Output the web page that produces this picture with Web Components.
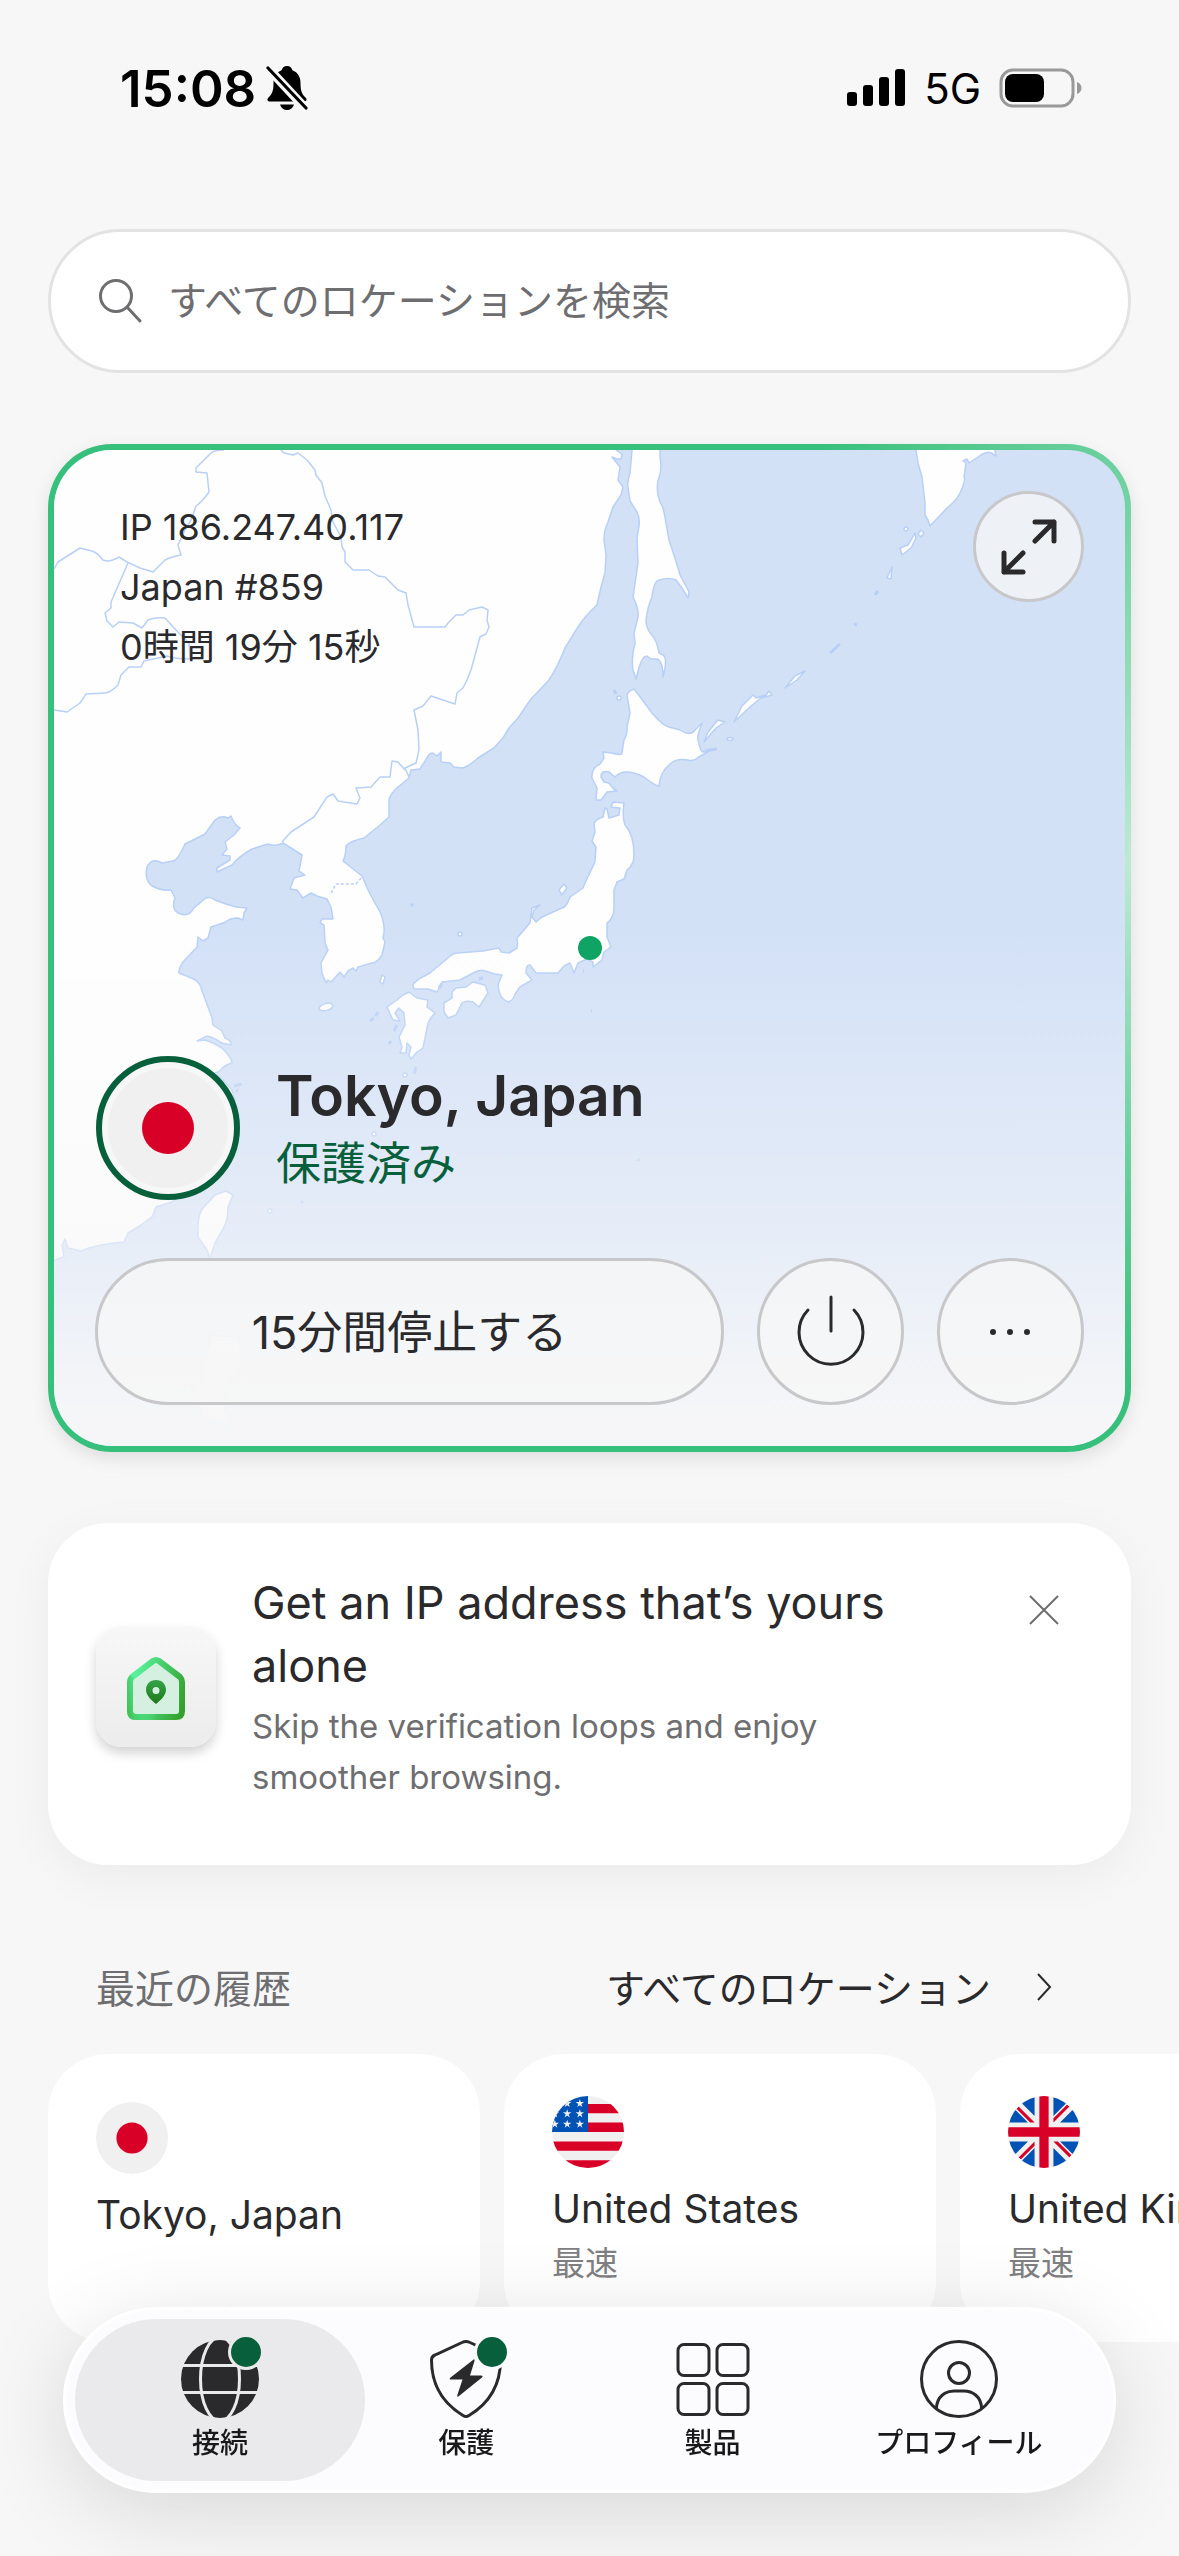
<!DOCTYPE html>
<html lang="ja">
<head>
<meta charset="utf-8">
<meta name="viewport" content="width=device-width, initial-scale=1">
<title>VPN</title>
<style>
	:root {
		--ink: #2a2a2d;
		--muted: #6e6e71;
		--green: #37c07b;
		--deep-green: #07603b;
		--page: #f7f7f7;
	}

	body {
		margin: 0;
		min-height: 100vh;
		background: var(--page);
		color: var(--ink);
		font-family: Inter, "Noto Sans CJK JP", sans-serif;
		overflow: hidden;
	}

	main {
		display: flex;
		flex-direction: column;
		gap: 71px;
		padding: 53px 48px 200px;
	}
</style>
</head>
<body>
	<status-bar time="15:08" network="5G"></status-bar>
	<main>
		<search-field placeholder="すべてのロケーションを検索"></search-field>
		<connection-card>
			<span slot="info">IP 186.247.40.117</span>
			<span slot="info">Japan #859</span>
			<span slot="info">0時間 19分 15秒</span>
			<country-flag slot="flag" country="jp"></country-flag>
			<span slot="place">Tokyo, Japan</span>
			<span slot="status">保護済み</span>
			<span slot="pause">15分間停止する</span>
		</connection-card>
		<promo-card>
			<span slot="title">Get an IP address that’s yours alone</span>
			<span slot="text">Skip the verification loops and enjoy smoother browsing.</span>
		</promo-card>
		<recent-locations>
			<span slot="title">最近の履歴</span>
			<span slot="more">すべてのロケーション</span>
			<location-card country="jp" name="Tokyo, Japan"></location-card>
			<location-card country="us" name="United States" note="最速"></location-card>
			<location-card country="gb" name="United Kingdom" note="最速"></location-card>
		</recent-locations>
	</main>
	<tab-bar>
		<tab-item icon="globe" active badge>接続</tab-item>
		<tab-item icon="shield" badge>保護</tab-item>
		<tab-item icon="grid">製品</tab-item>
		<tab-item icon="profile">プロフィール</tab-item>
	</tab-bar>

<script>
class StatusBar extends HTMLElement {
	constructor() {
		super();
		this.shadow = this.attachShadow({ mode: "open" });
	}

	connectedCallback() {
		this.shadow.innerHTML = `
			<style>
				:host {
					display: flex;
					justify-content: space-between;
					align-items: center;
					height: 176px;
					padding: 0 96px 0 120px;
					color: #000;
				}

				.group {
					display: flex;
					align-items: center;
				}

				.time {
					font-size: 51px;
					font-weight: 600;
					margin-right: 10px;
				}

				.network {
					font-size: 42px;
					margin: 0 18px;
				}

				svg {
					display: block;
				}
			</style>
			<div class="group">
				<span class="time">${this.getAttribute("time")}</span>
				<svg width="42" height="44" viewBox="0 0 42 44">
					<path d="M21 0c3 0 5 2 5.400 4.300C32 6.500 34.500 11 34.500 17c0 8 1.500 11 5 14.500C41.500 33.500 40.500 35.500 38 35.500H4C1.500 35.500.500 33.500 2.500 31.500 6 28 7.500 25 7.500 17c0-6 2.500-10.500 8.100-12.700C16 2 18 0 21 0z"/>
					<path d="M14 38.500h14c-1 3.500-3.500 5.500-7 5.500s-6-2-7-5.500z"/>
					<path d="M1 1l39 42" stroke="#f7f7f7" stroke-width="9"/>
					<path d="M2 2l38 40" stroke="#000" stroke-width="3.200" stroke-linecap="round"/>
				</svg>
			</div>
			<div class="group">
				<svg width="60" height="38" viewBox="0 0 60 38">
					<rect x="1" y="23" width="10" height="14" rx="3"/>
					<rect x="17" y="16" width="10" height="21" rx="3"/>
					<rect x="33" y="8" width="10" height="29" rx="3"/>
					<rect x="49" y="0" width="10" height="37" rx="3"/>
				</svg>
				<span class="network">${this.getAttribute("network")}</span>
				<svg width="84" height="40" viewBox="0 0 84 40">
					<rect x="2" y="2" width="72" height="36" rx="12" fill="none" stroke="#999" stroke-width="3"/>
					<rect x="6" y="6" width="39" height="28" rx="8"/>
					<path d="M78 14c6 2 6 10 0 12z" fill="#999"/>
				</svg>
			</div>`;
	}
}
customElements.define("status-bar", StatusBar);

class SearchField extends HTMLElement {
	constructor() {
		super();
		this.shadow = this.attachShadow({ mode: "open" });
	}

	connectedCallback() {
		const text = this.getAttribute("placeholder");
		this.shadow.innerHTML = `
			<style>
				:host {
					display: block;
				}

				label {
					display: flex;
					align-items: center;
					gap: 24px;
					height: 144px;
					padding: 0 45px;
					box-sizing: border-box;
					border: 3px solid #e3e3e3;
					border-radius: 72px;
					background: #fff;
				}

				svg {
					flex: none;
				}

				input {
					flex: 1;
					min-width: 0;
					border: 0;
					padding: 0;
					outline: 0;
					background: none;
					color: var(--ink);
					font: inherit;
					font-size: 39px;
					line-height: 60px;
				}

				input::placeholder {
					color: var(--muted);
					opacity: 1;
				}
			</style>
			<label>
				<svg width="48" height="48" viewBox="0 0 48 48" fill="none" stroke="#6e6e71" stroke-width="3" stroke-linecap="round">
					<circle cx="20" cy="19" r="15.500"/>
					<path d="M31 30l13 14"/>
				</svg>
				<input type="search" aria-label="${text}" placeholder="${text}">
			</label>`;
	}
}
customElements.define("search-field", SearchField);

// Round flags on a 512 grid
const star = (x, y) =>
	`<path transform="translate(${x} ${y})" d="M0-31 7-9H30L11 5 18 27 0 13-18 27-11 5-30-9H-7z"/>`;

const FLAGS = {
	jp: `<circle cx="256" cy="256" r="111" fill="#d80027"/>`,
	us: `
		<path fill="#d80027" d="M245 56h267v66H245zM245 189h267v67H245zM0 323h512v67H0zM0 456h512v56H0z"/>
		<path fill="#0052b4" d="M0 0h256v256H0z"/>
		<g fill="#f0f0f0">${[52, 125, 199]
			.map((y) => [20, 108, 198].map((x) => star(x, y)).join(""))
			.join("")}</g>`,
	gb: `
		<path fill="#0052b4" d="M53 100 0 60V189H142zM512 189V60L459 100 370 189zM0 323V452L53 412 142 323zM412 53 450 0H323V142zM100 459 60 512H189V370zM189 0H60L100 53 189 142zM323 512H452L412 459 323 370zM370 323l89 89 53 40V323z"/>
		<path fill="#d80027" d="M0 223H223V0H289V223H512V289H289V512H223V289H0z"/>
		<path fill="#d80027" d="M323 323 437 437 452 421 354 323zM189 323 75 437 91 452 189 354zM189 189 75 75 60 91 158 189zM323 189 437 75 421 60 323 158z"/>`,
};

class CountryFlag extends HTMLElement {
	constructor() {
		super();
		this.shadow = this.attachShadow({ mode: "open" });
	}

	connectedCallback() {
		this.shadow.innerHTML = `
			<style>
				:host {
					display: block;
					width: 72px;
					height: 72px;
				}

				svg {
					display: block;
					width: 100%;
					height: 100%;
					border-radius: 50%;
				}
			</style>
			<svg viewBox="0 0 512 512" aria-hidden="true">
				<path fill="#f0f0f0" d="M0 0h512v512H0z"/>
				${FLAGS[this.getAttribute("country")]}
			</svg>`;
	}
}
customElements.define("country-flag", CountryFlag);

class RegionMap extends HTMLElement {
	constructor() {
		super();
		this.shadow = this.attachShadow({ mode: "open" });
	}

	connectedCallback() {
		this.shadow.innerHTML = `
			<style>
				:host {
					display: block;
					background: #d3e1f7;
				}

				svg {
					display: block;
					width: 100%;
					height: 100%;
				}
			</style>
			<svg viewBox="0 0 1071 996" preserveAspectRatio="xMidYMid slice" aria-hidden="true">
				<defs>
					<linearGradient id="fade" x2="0" y2="1">
						<stop offset=".48" stop-color="#f7f7f8" stop-opacity="0"/>
						<stop offset=".75" stop-color="#f7f7f8" stop-opacity=".460"/>
						<stop offset=".97" stop-color="#f7f7f8" stop-opacity=".960"/>
					</linearGradient>
				</defs>
				<g fill="#fefefe" stroke="#b8d0f6" stroke-width="1.500" stroke-linejoin="round">
					<!-- mainland -->
					<path d="M-4-4H562V0L568 4 567 9 563 9 558 7 566 17 564 30 569 37 567 45 559 57 554 72Q550 80 550 90L552 105 551 123 547 137 543 155Q530 167 524 177L511 198Q504 216 495 230L477 249 464 268 455 278 449 288 440 298 424 308Q414 317 408 318L400 317 396 313 387 312 387 302 383 306 379 303Q375 303 373 308L366 319 357 320 355 328 344 337Q336 344 335 350V367L326 375 310 388Q296 391 292 396 292 405 289 411L308 426 315 442 326 462Q331 473 330 483L329 488 331 492 328 505Q323 513 318 513L304 517 302 521 299 518 294 521 290 527 286 522 277 532 274 530 272 533 268 523 267 513 274 500 271 493 270 475 266 473 268 469 279 469 277 457 273 449 263 446 257 443 249 448 243 440 236 439 240 428 251 425 245 421 248 405 237 398 229 393Q221 397 214 394L198 399Q184 407 178 415L163 422V418L176 410V406L168 405 173 399 171 392 180 385 186 378Q181 376 177 366L174 368Q167 365 161 370L151 384 131 394Q124 410 119 411L108 413Q98 407 93 417 90 430 98 436 107 441 117 440L121 448Q117 458 124 463 135 468 140 458L147 452Q154 444 161 450L172 454 182 457 193 458 190 463 189 470 184 468Q176 468 172 472L157 477 154 488 149 491 144 487 143 497 129 512Q124 520 125 523L135 527Q146 531 147 538L158 568 159 575 168 581 171 588Q178 591 177 595L168 593 161 589Q153 584 149 588L143 591 151 590 159 593 168 598Q178 608 178 613 170 615 166 621L161 623 172 633 178 640 182 655 178 680 165 710 140 735 118 752 102 757 98 767 84 777 74 783 70 792 60 793 47 795 35 798 27 801 14 798 11 789 8 795 10 807 3 809 0 811H-4z"/>
					<!-- Sakhalin -->
					<path d="M578-4V0L576 23Q573 32 574 37L576 51 583 62Q586 68 585 76L583 88 584 113 579 147Q585 158 584 167L580 183 581 193Q577 210 579 220L582 229 585 218Q588 206 593 206L597 209H603Q609 211 609 227 614 208 609 205L605 203Q603 190 597 184 592 178 592 170 594 155 598 147 600 131 605 130 615 127 622 130L628 138 634 148 635 142 626 125 621 108 615 90 611 67 609 58 606 52Q601 39 605 27 608 21 606 6V-4z"/>
					<!-- Kamchatka -->
					<path d="M862-4V0L864 13 868 27 871 53 871 65 874 70 876 76 893 58Q903 50 906 43 912 30 910 27L912 13 909 11 913 9 915 13 927 5Q934 1 937 3L942 6 940-4z"/>
					<!-- Hokkaido -->
					<path d="M580 239 587 248 598 263Q609 276 615 277L626 280Q636 287 641 280L648 273 644 285Q643 291 648 302L655 301 645 307Q639 312 634 310 622 308 616 314 606 322 605 336 600 335 590 327 570 317 561 327L555 322Q547 320 547 327L550 332 555 333Q559 339 563 341L553 342 547 350H542L543 338 538 328Q537 318 546 314L550 308 549 302 558 303Q568 306 568 303L570 290Q574 284 573 277L576 263 573 245Q574 241 580 239z"/>
					<!-- Honshu -->
					<path d="M551 358 549 367Q544 368 540 373L541 382 538 391 542 397 541 412 531 433 529 438 516 447Q513 457 508 458L488 467 482 472 478 467 480 460 486 455 478 458 476 473 463 488Q464 495 463 498L455 503 447 502 445 498 429 501 404 503Q398 503 394 508L376 523Q360 531 359 535L360 539 374 539 383 542 388 532 406 530 419 523Q426 519 431 521L441 524 448 525 444 535Q445 549 454 552 460 550 461 544L466 537 478 530 472 523Q472 514 476 515L482 523H504L510 516 516 513 520 523 524 513 533 509 539 512V517L548 510 550 502 557 497 553 487V473Q560 468 560 458V440L563 432 570 429 573 420Q580 415 580 405 580 385 571 375 568 367 570 353L559 352 557 357 566 358 565 365 555 368 553 359z"/>
					<!-- Shikoku and Kyushu -->
					<path d="M398 542 402 538 412 537 419 532 431 535 434 543 425 557 419 552Q412 550 408 553L402 565 394 568 390 562V553L398 548z"/>
					<path d="M355 542 363 548 374 550 373 557 381 563Q374 570 373 578L369 598 363 602 357 609 355 605 357 597 353 593 352 603 346 603 348 597 345 587 351 575 350 563 345 558 341 563 346 571 339 570 333 557 343 550 349 545z"/>
					<ellipse cx="272" cy="557" rx="7" ry="3.500" transform="rotate(-15 272 557)"/>
					<!-- Taiwan, Luzon -->
					<path d="M172 741 179 745 174 757Q174 770 170 777L161 793 156 808 153 800 144 787Q143 765 149 758L161 745z"/>
					<path d="M157 885 185 888 188 913 173 937 169 953 177 977 149 967 143 947 137 937 147 930z"/>
					<!-- islands -->
					<path d="M861 83 862 88 857 98 848 105 846 98 854 95zM867 80 870 83 867 87 864 84zM838 117 833 128 837 129zM731 238 741 226 751 221 743 230zM680 272 688 256 699 245 702 248 712 245 715 241 718 245 707 248 697 256zM650 292 654 282 664 270 671 272 662 278zM510 434 505 440 508 445 513 438zM328 525 326 532 329 534 331 527z"/>
					<ellipse cx="676" cy="289" rx="3" ry="1.500"/>
					<circle cx="852" cy="79" r="2"/>
					<circle cx="565" cy="248" r="2"/>
					<circle cx="358" cy="455" r="1"/>
					<circle cx="406" cy="484" r="2"/>
					<circle cx="351" cy="625" r="2"/>
					<circle cx="320" cy="684" r="2"/>
					<circle cx="216" cy="761" r="2"/>
					<path fill="none" stroke-width="3" d="M821 145l3-4M801 176l1-3M776 203l10-9M651 301l12-2M560 240l2 4M360 624l2-7M316 571l4-3M322 566l2-4M335 594l2-3M340 581l3-6M385 538l3-4M425 529l4-1M180 636l8-2M182 642l2-3M247 751l2 2M584 709l1 2M537 561h1M529 521h1"/>
				</g>
				<g fill="none" stroke="#b8d0f6" stroke-width="1.500" stroke-linejoin="round">
					<path d="M170 0Q160 0 157 3L142 18V22L153 23 155 42Q148 52 142 56L137 70 131 80 124 95 127 105Q117 107 111 110L99 122 86 118 73 112 65 107Q55 113 49 110 44 103 38 101L26 98 4 112 0 119"/>
					<path d="M74 113 57 152V158L51 163 53 171 59 177 65 172 79 173 88 178 94 170Q101 167 111 168L122 180 135 193 136 209Q121 209 113 206L90 211 87 217 75 217 67 225 64 235Q56 243 51 243L32 244 26 253 13 262 0 260"/>
					<path d="M227 0 230 3 239 5 244 3 253 10 261 20 262 25 268 33 271 46 277 60 279 72 287 87 288 97 291 102V112L299 120H315L324 126 331 127 344 140 352 143 354 155 356 162 360 177H391L395 172 402 165H409L415 160 428 157 434 160 433 170 435 177 432 184 426 187 417 220 413 230 409 238 403 243 401 254 377 246 369 256 360 260 364 280 365 300 362 313 351 318 355 327"/>
					<path d="M351 320 344 312 338 311 336 327 326 327 317 337 302 338 306 348 303 354 284 351 279 344 273 347 260 367 237 382 228 392"/>
					<path stroke-dasharray="3 2" d="M307 428 302 434 282 434 276 445"/>
				</g>
				<path fill="url(#fade)" d="M-1 0H1072V997H-1z"/>
				<circle cx="536" cy="498" r="12" fill="#0fa463"/>
			</svg>`;
	}
}
customElements.define("region-map", RegionMap);

class ConnectionCard extends HTMLElement {
	constructor() {
		super();
		this.shadow = this.attachShadow({ mode: "open" });
	}

	connectedCallback() {
		this.shadow.innerHTML = `
			<style>
				:host {
					display: block;
					padding: 6px;
					border-radius: 64px;
					background: conic-gradient(var(--green) 25deg, #bdead3 81deg, var(--green) 130deg);
					box-shadow: 0 6px 18px rgba(0, 0, 0, 0.1);
				}

				.inner {
					position: relative;
					display: flex;
					flex-direction: column;
					justify-content: space-between;
					aspect-ratio: 1071 / 996;
					padding: 41px;
					box-sizing: border-box;
					border-radius: 58px;
					overflow: hidden;
				}

				region-map {
					position: absolute;
					inset: 0;
				}

				.top,
				.bottom {
					position: relative;
					display: flex;
				}

				.top {
					justify-content: space-between;
					align-items: flex-start;
				}

				.info {
					display: flex;
					flex-direction: column;
					padding: 6px 0 0 25px;
					font-size: 36px;
					line-height: 60px;
				}

				.bottom {
					flex-direction: column;
					gap: 58px;
				}

				.place {
					display: flex;
					align-items: center;
					gap: 36px;
					padding-left: 1px;
				}

				.ring {
					padding: 6px;
					border: 6px solid var(--deep-green);
					border-radius: 50%;
					background: #f7f7f7;
				}

				::slotted(country-flag) {
					width: 120px;
					height: 120px;
				}

				h1,
				p {
					margin: 0;
				}

				h1 {
					font-size: 57px;
					font-weight: 600;
					line-height: 72px;
				}

				p {
					color: var(--deep-green);
					font-size: 45px;
					line-height: 64px;
				}

				.actions {
					display: flex;
					gap: 33px;
				}

				button {
					display: flex;
					align-items: center;
					justify-content: center;
					height: 147px;
					padding: 0;
					border: 3px solid #c8c8ca;
					border-radius: 74px;
					box-sizing: border-box;
					background: rgba(247, 247, 247, 0.75);
					color: var(--ink);
					font: inherit;
					font-size: 45px;
				}

				.pause {
					flex: 1;
					padding-bottom: 4px;
				}

				.round {
					width: 147px;
				}

				.expand {
					width: 111px;
					height: 111px;
				}

				svg {
					flex: none;
					fill: none;
					stroke: var(--ink);
					stroke-linecap: round;
					stroke-linejoin: round;
				}
			</style>
			<div class="inner">
				<region-map></region-map>
				<div class="top">
					<div class="info"><slot name="info"></slot></div>
					<button class="expand" aria-label="地図を拡大">
						<svg width="112" height="112" viewBox="0 0 112 112" stroke-width="5">
							<path d="M62 31H81V50M81 31 62 50M31 62V81H50M31 81 50 62"/>
						</svg>
					</button>
				</div>
				<div class="bottom">
					<div class="place">
						<div class="ring"><slot name="flag"></slot></div>
						<div>
							<h1><slot name="place"></slot></h1>
							<p><slot name="status"></slot></p>
						</div>
					</div>
					<div class="actions">
						<button class="pause"><slot name="pause"></slot></button>
						<button class="round" aria-label="切断">
							<svg width="80" height="80" viewBox="-40 -40 80 80" stroke-width="3">
								<path d="M-23-22A32 32 0 1 0 23-22M0-35V-1"/>
							</svg>
						</button>
						<button class="round" aria-label="その他">
							<svg width="60" height="12" viewBox="-30 -6 60 12" stroke-width="6">
								<path d="M-18 0h0M-1 0h0M16 0h0"/>
							</svg>
						</button>
					</div>
				</div>
			</div>`;
	}
}
customElements.define("connection-card", ConnectionCard);

class PromoCard extends HTMLElement {
	constructor() {
		super();
		this.shadow = this.attachShadow({ mode: "open" });
	}

	connectedCallback() {
		this.shadow.innerHTML = `
			<style>
				:host {
					display: flex;
					align-items: center;
					gap: 36px;
					padding: 48px 48px 62px;
					border-radius: 60px;
					background: #fff;
					box-shadow: 0 12px 48px rgba(0, 0, 0, 0.05);
				}

				.icon {
					flex: none;
					width: 120px;
					height: 120px;
					border-radius: 26px;
					background: linear-gradient(#f7f7f7, #ececec);
					box-shadow: 0 6px 12px rgba(0, 0, 0, 0.18);
				}

				.body {
					flex: 1;
				}

				h2,
				p {
					margin: 0;
				}

				h2 {
					font-size: 45px;
					font-weight: 400;
					line-height: 63px;
				}

				p {
					margin-top: 4px;
					padding-right: 60px;
					color: var(--muted);
					font-size: 33px;
					line-height: 51px;
				}

				button {
					flex: none;
					align-self: flex-start;
					width: 78px;
					height: 78px;
					padding: 0;
					border: 0;
					background: none;
				}
			</style>
			<svg class="icon" viewBox="0 0 120 120" aria-hidden="true">
				<defs>
					<linearGradient id="wall" gradientUnits="userSpaceOnUse" x1="40" y1="50" x2="92" y2="65">
						<stop stop-color="#56f09a"/>
						<stop offset="1" stop-color="#33a02c"/>
					</linearGradient>
					<linearGradient id="side" gradientUnits="userSpaceOnUse" x1="30" y1="75" x2="58" y2="70">
						<stop stop-color="#3fbf55"/>
						<stop offset="1" stop-color="#56f09a" stop-opacity="0"/>
					</linearGradient>
					<linearGradient id="pin" x2="0" y2="1">
						<stop stop-color="#35a346"/>
						<stop offset="1" stop-color="#1f7a1c"/>
					</linearGradient>
				</defs>
				<g stroke-width="6" stroke-linejoin="round">
					<path fill="#d5efe1" stroke="url(#wall)" d="M57 34Q60 32 63 34L84 50Q86 52 86 55V84Q86 90 80 90H40Q34 90 34 84V55Q34 52 36 50z"/>
					<path fill="none" stroke="url(#side)" d="M36 50Q34 52 34 55V84Q34 90 40 90H60"/>
				</g>
				<path fill="url(#pin)" fill-rule="evenodd" d="M60 53c6 0 10 4 10 10 0 5-5 10-10 14-5-4-10-9-10-14 0-6 4-10 10-10zm0 7a3.500 3.500 0 1 0 0 7 3.500 3.500 0 0 0 0-7z"/>
			</svg>
			<div class="body">
				<h2><slot name="title"></slot></h2>
				<p><slot name="text"></slot></p>
			</div>
			<button aria-label="閉じる">
				<svg width="78" height="78" viewBox="0 0 78 78" stroke="#6e6e71" stroke-width="2">
					<path d="M25 25 53 53M53 25 25 53"/>
				</svg>
			</button>`;
	}
}
customElements.define("promo-card", PromoCard);

class RecentLocations extends HTMLElement {
	constructor() {
		super();
		this.shadow = this.attachShadow({ mode: "open" });
	}

	connectedCallback() {
		this.shadow.innerHTML = `
			<style>
				:host {
					display: block;
				}

				header {
					display: flex;
					justify-content: space-between;
					align-items: center;
					height: 100px;
					margin-bottom: 18px;
					padding: 0 76px 0 48px;
					font-size: 39px;
				}

				h2 {
					margin: 0;
					color: var(--muted);
					font-size: 39px;
					font-weight: 400;
				}

				a {
					display: flex;
					align-items: center;
					gap: 42px;
					color: inherit;
					text-decoration: none;
				}

				.cards {
					display: flex;
					gap: 24px;
					margin-right: -48px;
					overflow-x: auto;
					scrollbar-width: none;
				}
			</style>
			<header>
				<h2><slot name="title"></slot></h2>
				<a href="#">
					<slot name="more"></slot>
					<svg width="22" height="36" viewBox="0 0 22 36" fill="none" stroke="#2a2a2d" stroke-width="2">
						<path d="M5 6 17 19 5 32"/>
					</svg>
				</a>
			</header>
			<div class="cards"><slot></slot></div>`;
	}
}
customElements.define("recent-locations", RecentLocations);

class LocationCard extends HTMLElement {
	constructor() {
		super();
		this.shadow = this.attachShadow({ mode: "open" });
	}

	connectedCallback() {
		const note = this.getAttribute("note");
		this.shadow.innerHTML = `
			<style>
				:host {
					flex: none;
					display: block;
					width: 432px;
					min-height: 288px;
					padding: ${note ? 42 : 48}px 48px 0;
					border-radius: 60px;
					background: #fff;
					box-sizing: border-box;
				}

				.name,
				.note {
					white-space: nowrap;
					line-height: 48px;
				}

				.name {
					margin-top: 17px;
					font-size: 39px;
				}

				.note {
					margin-top: 6px;
					color: #808083;
					font-size: 33px;
				}
			</style>
			<country-flag country="${this.getAttribute("country")}"></country-flag>
			<div class="name">${this.getAttribute("name")}</div>
			${note ? `<div class="note">${note}</div>` : ""}`;
	}
}
customElements.define("location-card", LocationCard);

class TabBar extends HTMLElement {
	constructor() {
		super();
		this.shadow = this.attachShadow({ mode: "open" });
	}

	connectedCallback() {
		this.shadow.innerHTML = `
			<style>
				:host {
					position: fixed;
					left: 63px;
					right: 63px;
					bottom: 63px;
				}

				nav {
					display: flex;
					padding: 9px 31px;
					border: 3px solid #fff;
					border-radius: 93px;
					background: #fcfcfe;
					box-shadow: 0 18px 90px rgba(0, 0, 0, 0.13);
				}
			</style>
			<nav><slot></slot></nav>`;
	}
}
customElements.define("tab-bar", TabBar);

const ICONS = {
	globe: `
		<circle cx="39" cy="39" r="39" fill="#2a2a2d" stroke="none"/>
		<g stroke="#eaeaec">
			<path d="M0 25.500H78M0 52.500H78"/>
			<ellipse cx="39" cy="39" rx="19.500" ry="42"/>
		</g>`,
	shield: `
		<path d="M35 2.500Q39 .500 43 2.500L70 15Q73.500 16.500 73.500 20C73.500 46 61 64 42 75.500Q39 77.500 36 75.500C17 64 4.500 46 4.500 20Q4.500 16.500 8 15z"/>
		<path fill="#2a2a2d" stroke="none" d="M46 20Q48 18 47.500 21L43 35.500H54Q56.500 36 55 37.500L32 56Q29.500 58 30.500 54.500L35.500 39.500H24Q21.500 39.500 23.500 37.500z"/>`,
	grid: `
		<rect x="4" y="4.500" width="31" height="31" rx="6"/>
		<rect x="43" y="4.500" width="31" height="31" rx="6"/>
		<rect x="4" y="43.500" width="31" height="31" rx="6"/>
		<rect x="43" y="43.500" width="31" height="31" rx="6"/>`,
	profile: `
		<circle cx="39" cy="39" r="37.500"/>
		<circle cx="39" cy="33" r="10.500"/>
		<path d="M16.500 68C17 56 26 51 34 51H44C52 51 61 56 61.500 68"/>`,
};

class TabItem extends HTMLElement {
	constructor() {
		super();
		this.shadow = this.attachShadow({ mode: "open" });
	}

	connectedCallback() {
		const badge = this.hasAttribute("badge");
		const ring = this.hasAttribute("active") ? "#eaeaec" : "#fcfcfe";
		this.shadow.innerHTML = `
			<style>
				:host {
					flex: 1;
					display: flex;
				}

				:host([active]) a {
					margin: 0 -22px;
					background: #eaeaec;
				}

				a {
					flex: 1;
					display: flex;
					flex-direction: column;
					align-items: center;
					gap: 7px;
					padding: 21px 0 20px;
					border-radius: 81px;
					color: #19191b;
					font-size: 28px;
					font-weight: 500;
					line-height: 36px;
					text-decoration: none;
					white-space: nowrap;
				}

				svg {
					overflow: visible;
				}
			</style>
			<a href="#">
				<svg width="78" height="78" viewBox="0 0 78 78" fill="none" stroke="#2a2a2d" stroke-width="3" aria-hidden="true">
					${ICONS[this.getAttribute("icon")]}
					${badge ? `<circle cx="65" cy="12" r="16.500" fill="#07603b" stroke="${ring}"/>` : ""}
				</svg>
				<span><slot></slot></span>
			</a>`;
	}
}
customElements.define("tab-item", TabItem);
</script>
</body>
</html>
